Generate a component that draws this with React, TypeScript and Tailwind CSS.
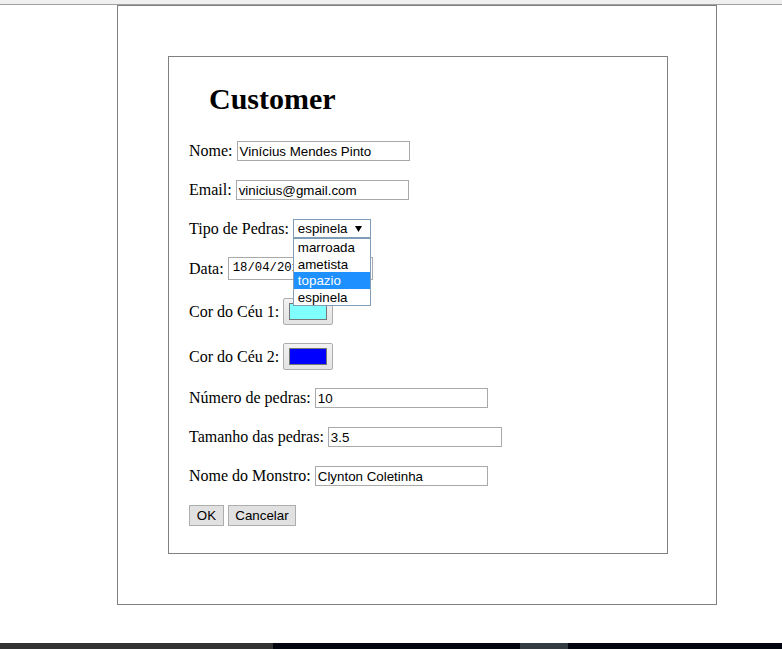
import type { ReactNode } from "react";

const serif = { fontFamily: '"Liberation Serif", "Times New Roman", serif' };
const sans = { fontFamily: '"Liberation Sans", Arial, sans-serif' };

function Row({ className, children }: { className: string; children: ReactNode }) {
  return <div className={`flex items-center gap-1 text-[16px] leading-[18px] text-black ${className}`}>{children}</div>;
}

function TextBox({ value, width = "w-[173px]" }: { value: string; width?: string }) {
  return (
    <div
      style={sans}
      className={`${width} h-[20px] border border-[#a9a9a9] bg-white pl-[2px] text-[13.33px] leading-[19px] text-black whitespace-nowrap overflow-hidden`}
    >
      {value}
    </div>
  );
}

function ColorBox({ color }: { color: string }) {
  return (
    <div className="w-[50px] h-[27px] rounded-[2px] border border-[#adadad] bg-gradient-to-b from-[#f2f2f2] to-[#e3e3e3] flex items-center justify-center">
      <div className="w-[38px] h-[17px] border border-[#777777]" style={{ backgroundColor: color }} />
    </div>
  );
}

const options = ["marroada", "ametista", "topazio", "espinela"];

export default function App() {
  return (
    <div className="w-full h-[649px] bg-white flex flex-col overflow-hidden" style={serif}>
      <div className="h-[4px] bg-[#f0f0f0]" />
      <div className="h-px bg-[#a0a0a0]" />

      <div className="ml-[117px] w-[600px] h-[600px] border border-[#808080]">
        <div className="mt-[50px] ml-[50px] w-[500px] h-[498px] border border-[#808080] pl-[20px]">
          <h1 className="mt-[25px] pl-[20px] text-[30px] leading-[34px] font-bold text-black">Customer</h1>

          <Row className="mt-[25px] h-[20px]">
            <span>Nome:</span>
            <TextBox value="Vinícius Mendes Pinto" />
          </Row>

          <Row className="mt-[19px] h-[20px]">
            <span>Email:</span>
            <TextBox value="vinicius@gmail.com" />
          </Row>

          <Row className="mt-[19px] h-[19px]">
            <span>Tipo de Pedras:</span>
            <div className="relative z-10">
              <div
                style={sans}
                className="w-[78px] h-[19px] border border-[#7f9db9] bg-white flex items-center justify-between pl-[4px] pr-[8px] text-[13.33px] leading-[18px] text-black"
              >
                <span className="pt-px">espinela</span>
                <svg width="7" height="6" viewBox="0 0 7 6">
                  <path d="M0 0 H7 L3.5 6 Z" fill="#000" />
                </svg>
              </div>
              <div style={sans} className="absolute left-0 top-[19px] w-[78px] border border-[#7f9db9] bg-white text-[13.33px]">
                {options.map((o) => (
                  <div
                    key={o}
                    className={`h-[16.5px] leading-[17px] pl-[4px] ${o === "topazio" ? "bg-[#1e90ff] text-white" : "text-black"}`}
                  >
                    {o}
                  </div>
                ))}
              </div>
            </div>
          </Row>

          <Row className="mt-[19px] h-[23px]">
            <span>Data:</span>
            <div
              style={{ fontFamily: '"Liberation Mono", "Courier New", monospace' }}
              className="w-[145px] h-[23px] border border-[#a9a9a9] bg-white pl-[4px] text-[12.3px] leading-[21px] text-black whitespace-nowrap overflow-hidden"
            >
              18/04/2016
            </div>
          </Row>

          <Row className="mt-[18px] h-[27px]">
            <span>Cor do Céu 1:</span>
            <ColorBox color="#80ffff" />
          </Row>

          <Row className="mt-[18px] h-[27px]">
            <span>Cor do Céu 2:</span>
            <ColorBox color="#0000ff" />
          </Row>

          <Row className="mt-[18px] h-[20px]">
            <span>Número de pedras:</span>
            <TextBox value="10" />
          </Row>

          <Row className="mt-[19px] h-[20px]">
            <span>Tamanho das pedras:</span>
            <TextBox value="3.5" width="w-[174px]" />
          </Row>

          <Row className="mt-[19px] h-[20px]">
            <span>Nome do Monstro:</span>
            <TextBox value="Clynton Coletinha" />
          </Row>

          <div className="mt-[19px] flex gap-[4px]" style={sans}>
            <button className="w-[35px] h-[21px] border border-[#adadad] bg-[#e1e1e1] text-[13.33px] text-black">OK</button>
            <button className="w-[68px] h-[21px] border border-[#adadad] bg-[#e1e1e1] text-[13.33px] text-black">Cancelar</button>
          </div>
        </div>
      </div>

      <div className="flex-1" />
      <div className="h-[6px] flex">
        <div className="w-[273px] bg-[#333333]" />
        <div className="w-[247px] bg-[#03060e]" />
        <div className="w-[48px] bg-[#333a40]" />
        <div className="flex-1 bg-[#03060e]" />
      </div>
    </div>
  );
}
